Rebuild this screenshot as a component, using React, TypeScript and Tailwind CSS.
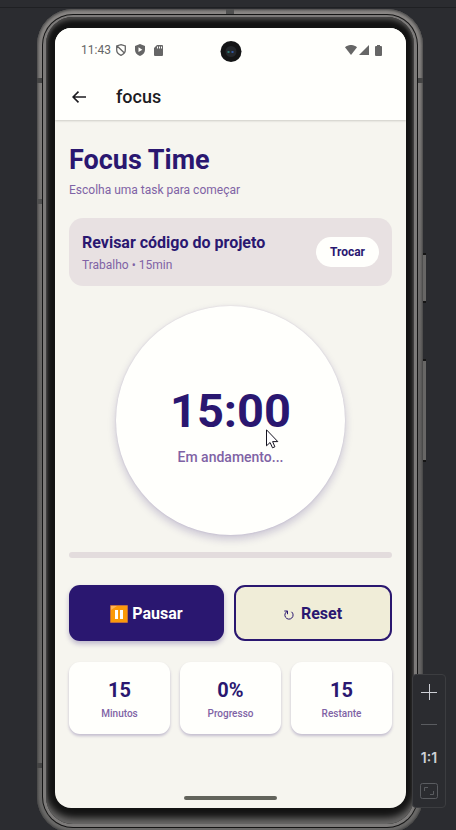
import React from "react";

const stats = [
  { value: "15", label: "Minutos" },
  { value: "0%", label: "Progresso" },
  { value: "15", label: "Restante" },
];

function StatusBar() {
  return (
    <div className="flex h-11 items-center justify-between pr-6 pl-[26px] text-[#666666]">
      <div className="flex items-center">
        <span className="w-[35px] text-[12px] leading-4">11:43</span>
        <svg width="10" height="12" viewBox="0 0 10 12" fill="none" stroke="currentColor" strokeWidth="1.3">
          <path d="M5 .7 9.300 2v4c0 2.600-1.800 4.300-4.300 5.300C2.500 10.300.7 8.600.7 6V2zM1.400 2.200l7 6.800" />
        </svg>
        <svg className="ml-[9px]" width="10" height="12" viewBox="0 0 10 12" fill="currentColor">
          <path fillRule="evenodd" d="M5 0l5 1.900V6c0 3-2.200 5-5 6-2.800-1-5-3-5-6V1.900zM3.500 3.300v4.800L7.400 5.700z" />
        </svg>
        <svg className="ml-[9px]" width="9" height="11" viewBox="0 0 9 11" fill="currentColor">
          <path fillRule="evenodd" d="M3 0h5q1 0 1 1v9q0 1-1 1H1q-1 0-1-1V3zM3 1.500v2h1v-2zm2 0v2h1v-2zm2 0v2h1v-2z" />
        </svg>
      </div>
      <div className="flex items-center">
        <svg width="12" height="10" viewBox="0 0 12 10" fill="currentColor">
          <path d="M0 2.300C3.500-.8 8.500-.8 12 2.300L6 10z" />
        </svg>
        <svg className="ml-[2px]" width="10" height="10" viewBox="0 0 10 10" fill="currentColor">
          <path d="M10 0v10H0z" />
        </svg>
        <svg className="ml-[6px]" width="7" height="11" viewBox="0 0 7 11" fill="currentColor">
          <path d="M2 0h3v1h1q1 0 1 1v8q0 1-1 1H1q-1 0-1-1V2q0-1 1-1h1z" />
        </svg>
      </div>
    </div>
  );
}

function PauseIcon() {
  return (
    <svg width="18" height="18" viewBox="0 0 18 18" aria-hidden="true">
      <rect width="18" height="18" rx="1" fill="#c06c3c" />
      <rect x="1" y="1" width="16" height="16" fill="#fb9a0a" />
      <path d="M1 1h6L1 5z" fill="#ffb554" />
      <path d="M5 5h3v9H5zM10 5h3v9h-3z" fill="#fff" />
    </svg>
  );
}

function ResetIcon() {
  return (
    <svg className="mt-[2px]" width="10" height="10" viewBox="0 0 10 10" fill="none" stroke="currentColor" aria-hidden="true">
      <path d="M.3 1h3.200v3.200M3.300 1.300A4.100 4.100 0 1 0 7.500 1.800" />
    </svg>
  );
}

function ZoomPanel() {
  return (
    <div className="absolute top-[674px] right-[10px] flex w-[34px] flex-col items-center rounded border border-[#3c3d40] bg-[#2b2c30] text-[#ced0d6]">
      <button aria-label="Zoom in" className="flex h-[33px] w-full items-center justify-center">
        <svg width="16" height="16" viewBox="0 0 16 16" stroke="currentColor"><path d="M8.500 0v16M0 8.500h16" /></svg>
      </button>
      <button aria-label="Zoom out" className="flex h-[33px] w-full items-center justify-center text-[#5a5c60]">
        <svg width="16" height="16" viewBox="0 0 16 16" stroke="currentColor"><path d="M0 7.500h16" /></svg>
      </button>
      <button className="h-[33px] w-full font-[Inter,sans-serif] text-[14px] font-semibold">1:1</button>
      <button aria-label="Fit to window" className="flex h-[33px] w-full items-center justify-center text-[#5a5c60]">
        <svg width="18" height="16" viewBox="0 0 18 16" fill="none" stroke="currentColor">
          <rect x=".5" y=".5" width="17" height="15" rx="2" />
          <path d="M4.500 8V4.500H8M10 11.500h3.500V8" />
        </svg>
      </button>
    </div>
  );
}

export default function App() {
  return (
    <div className="relative h-screen overflow-hidden bg-[#2b2c30] font-[Roboto,sans-serif]">
      <div className="h-2 border-b border-[#1f2023]" />
      <div className="relative mt-px mr-[33px] ml-[37px]">
        <div className="absolute top-[244px] -right-[3px] h-[50px] w-[3px] border-y-2 border-[#151515] bg-[#686766]" />
        <div className="absolute top-[350px] -right-[3px] h-[103px] w-[3px] border-y-2 border-[#151515] bg-[#686766]" />
        <div className="rounded-[36px] bg-linear-to-b from-[#8a8785] via-[#646362] to-[#6b6a69] p-[5px] shadow-[inset_0_0_3px_1px_#3f3f3f]">
          <div className="rounded-[31px] bg-[#151515] p-px">
            <div className="rounded-[30px] bg-[#7c7a79] px-[3px] pt-[2px] pb-[3px]">
              <div className="rounded-[27px] bg-[#131313] pt-[11px] pr-2 pb-4 pl-[9px] shadow-[inset_0_4px_4px_-1px_#4a4948,inset_0_-7px_7px_-1px_#6a6968,inset_0_0_3px_#4a4948]">
                <div className="relative overflow-hidden rounded-2xl bg-[#f6f5ef]">
                  <div className="absolute top-[13px] left-1/2 flex size-[21px] -translate-x-1/2 items-center justify-center rounded-full bg-[#141516]">
                    <div className="flex size-[11px] items-center justify-center gap-[2px] rounded-full bg-[#24272b]">
                      <span className="size-[2px] bg-[#2d7773]" />
                      <span className="size-[2px] bg-[#3056a0]" />
                    </div>
                  </div>
                  <header className="bg-[#fffffc] shadow-[0_1px_2px_#0000002b]">
                    <StatusBar />
                    <div className="flex h-12 items-center pt-px pl-[17px] text-[#1c1b1f]">
                      <button aria-label="Back">
                        <svg width="14" height="12" viewBox="0 0 14 12" fill="none" stroke="currentColor" strokeWidth="1.600">
                          <path d="M14 6H1.200M6.500.6 1.100 6l5.400 5.400" />
                        </svg>
                      </button>
                      <h1 className="ml-[30px] text-[18px] leading-6 font-medium">focus</h1>
                    </div>
                  </header>
                  <main className="px-[14px] pt-6 text-[#2a1770]">
                    <h2 className="text-[27px] leading-8 font-bold">Focus Time</h2>
                    <p className="mt-1 text-[12px] leading-5 text-[#7f63a5]">Escolha uma task para começar</p>
                    <section className="mt-[18px] flex h-[68px] items-center justify-between rounded-[14px] bg-[#e8e1e2] px-[13px]">
                      <div className="pt-px">
                        <h3 className="text-[16px] leading-6 font-bold">Revisar código do projeto</h3>
                        <p className="text-[12px] leading-5 text-[#7f63a5]">Trabalho • 15min</p>
                      </div>
                      <button className="rounded-full bg-[#fffffc] px-[14px] py-[5px] text-[12px] leading-5 font-bold">Trocar</button>
                    </section>
                    <section className="relative mx-auto mt-5 flex size-[229px] flex-col items-center justify-center rounded-full bg-[#fffffc] shadow-[0_4px_8px_#2a177038,0_0_2px_#2a177022]">
                      <div className="pt-2 text-[47px] leading-[56px] font-bold">15:00</div>
                      <p className="mt-2 text-[14px] leading-5 font-medium text-[#7f63a5]">Em andamento...</p>
                      <svg className="absolute top-[123px] left-[150px]" width="13" height="20" viewBox="0 0 13 20" fill="#fff" stroke="#15131f">
                        <path d="M.5.8v16l3.600-3.300 2.400 5.300 2.400-1-2.300-5.200h5.200z" />
                      </svg>
                    </section>
                    <div role="progressbar" aria-valuenow={0} aria-label="Progresso" className="mt-[17px] h-[6px] rounded-[3px] bg-[#e3dcdd]" />
                    <div className="mt-[27px] flex h-14 gap-[10px] text-[16px] font-bold">
                      <button className="flex grow items-center justify-center gap-1 rounded-[11px] bg-[#2a1770] pt-px text-[#fffffc] shadow-[0_3px_5px_#2a177044]">
                        <PauseIcon />
                        Pausar
                      </button>
                      <button className="flex w-[158px] items-center justify-center gap-[7px] rounded-[11px] border-2 border-[#2a1770] bg-[#f0edd8] pt-px">
                        <ResetIcon />
                        Reset
                      </button>
                    </div>
                    <div className="mt-[21px] grid grid-cols-3 gap-[10px] text-center">
                      {stats.map((s) => (
                        <div key={s.label} className="rounded-[11px] bg-[#fffffc] pt-4 pb-3 shadow-[0_2px_3px_#2a177040]">
                          <div className="text-[20px] leading-6 font-bold">{s.value}</div>
                          <div className="mt-1 text-[10px] leading-4 font-medium text-[#7f63a5]">{s.label}</div>
                        </div>
                      ))}
                    </div>
                  </main>
                  <div className="mx-auto mt-[62px] mb-2 h-1 w-[93px] rounded-full bg-[#62635b]" />
                </div>
              </div>
            </div>
          </div>
        </div>
        <div className="absolute top-[69px] left-0 h-[5px] w-[5px] bg-[#454545]" />
        <div className="absolute top-[69px] right-0 h-[5px] w-[5px] bg-[#454545]" />
        <div className="absolute top-[190px] left-0 h-[5px] w-[5px] bg-[#505050]" />
        <div className="absolute top-[754px] left-0 h-[5px] w-[5px] bg-[#454545]" />
        <div className="absolute top-0 left-[189px] h-[5px] w-2 bg-[#505050]" />
      </div>
      <ZoomPanel />
    </div>
  );
}
